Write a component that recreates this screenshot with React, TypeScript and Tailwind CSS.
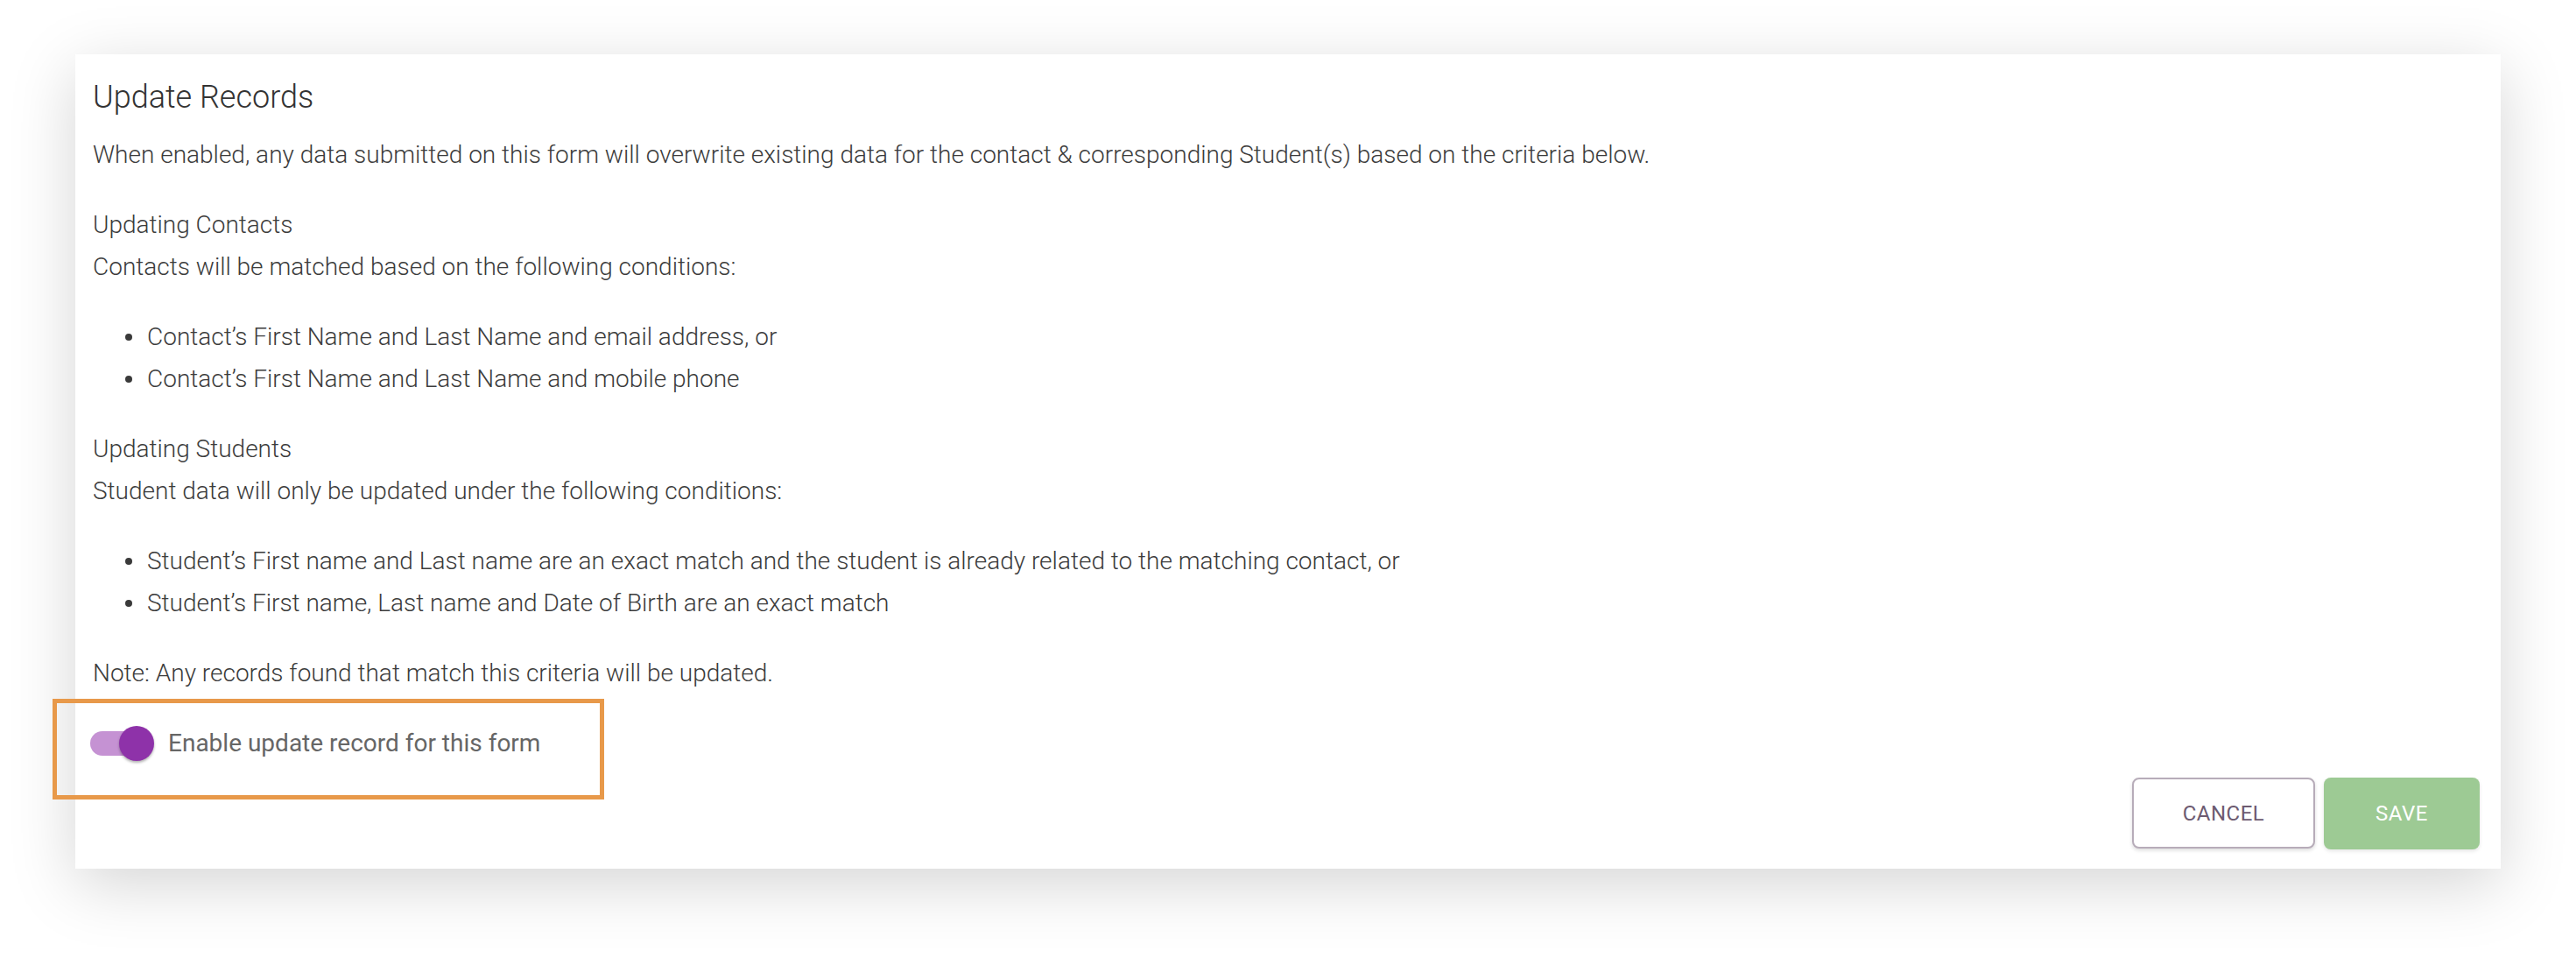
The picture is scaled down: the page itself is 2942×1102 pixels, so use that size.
import { useState } from "react";

const contactRules = [
  "Contact’s First Name and Last Name and email address, or",
  "Contact’s First Name and Last Name and mobile phone",
];

const studentRules = [
  "Student’s First name and Last name are an exact match and the student is already related to the matching contact, or",
  "Student’s First name, Last name and Date of Birth are an exact match",
];

function RuleList({ items }: { items: string[] }) {
  return (
    <ul className="flex flex-col">
      {items.map((item) => (
        <li key={item} className="flex items-center pl-[37px]">
          <span className="mr-[17px] h-[8px] w-[8px] shrink-0 rounded-full bg-[#3a3a3a]" />
          <span>{item}</span>
        </li>
      ))}
    </ul>
  );
}

function Toggle({ on, onChange }: { on: boolean; onChange: (v: boolean) => void }) {
  return (
    <button
      type="button"
      role="switch"
      aria-checked={on}
      onClick={() => onChange(!on)}
      className="relative h-[40px] w-[73px] shrink-0"
    >
      <span
        className={
          on
            ? "absolute left-0 top-[6px] h-[28px] w-[68px] rounded-full bg-[#c592d3]"
            : "absolute left-0 top-[6px] h-[28px] w-[68px] rounded-full bg-[#bdbdbd]"
        }
      />
      <span
        className={
          on
            ? "absolute right-0 top-0 h-[40px] w-[40px] rounded-full bg-[#8e32a9] shadow-[0_2px_3px_rgba(0,0,0,0.3)]"
            : "absolute left-0 top-0 h-[40px] w-[40px] rounded-full bg-[#fafafa] shadow-[0_2px_3px_rgba(0,0,0,0.3)]"
        }
      />
    </button>
  );
}

export default function App() {
  const [enabled, setEnabled] = useState(true);

  return (
    <div className="relative min-h-[1102px] w-full bg-white pt-[62px] font-['Roboto',sans-serif]">
      <section className="mx-[86px] bg-white pb-[22px] pl-[20px] pr-[24px] pt-[29px] shadow-[0_18px_70px_rgba(0,0,0,0.17)]">
        <h2 className="text-[36px] font-light leading-[40px] text-[#333333]">Update Records</h2>

        <div className="mt-[22px] flex flex-col gap-[32px] text-[28px] font-light leading-[48px] text-[#3c3c3c]">
          <p>
            When enabled, any data submitted on this form will overwrite existing data for the contact &amp;
            corresponding Student(s) based on the criteria below.
          </p>

          <div>
            <p>Updating Contacts</p>
            <p>Contacts will be matched based on the following conditions:</p>
          </div>

          <RuleList items={contactRules} />

          <div>
            <p>Updating Students</p>
            <p>Student data will only be updated under the following conditions:</p>
          </div>

          <RuleList items={studentRules} />

          <p>Note: Any records found that match this criteria will be updated.</p>

          <label className="-ml-[3px] flex h-[48px] items-center gap-[16px] font-normal text-[#666666]">
            <Toggle on={enabled} onChange={setEnabled} />
            <span>Enable update record for this form</span>
          </label>
        </div>

        <div className="mt-[15px] flex justify-end gap-[10px]">
          <button
            type="button"
            className="h-[81px] w-[209px] rounded-[8px] border-2 border-[#b7acb9] bg-white text-[24px] tracking-[0.5px] text-[#6d5b71] shadow-[0_2px_4px_rgba(0,0,0,0.14)]"
          >
            CANCEL
          </button>
          <button
            type="button"
            className="h-[82px] w-[178px] rounded-[8px] bg-[#9dca94] text-[24px] tracking-[0.5px] text-white shadow-[0_2px_4px_rgba(0,0,0,0.1)]"
          >
            SAVE
          </button>
        </div>
      </section>

      {/* highlight annotation around the toggle */}
      <div className="pointer-events-none absolute left-[60px] top-[798px] h-[115px] w-[630px] border-[5px] border-[#e8994a]" />
    </div>
  );
}
